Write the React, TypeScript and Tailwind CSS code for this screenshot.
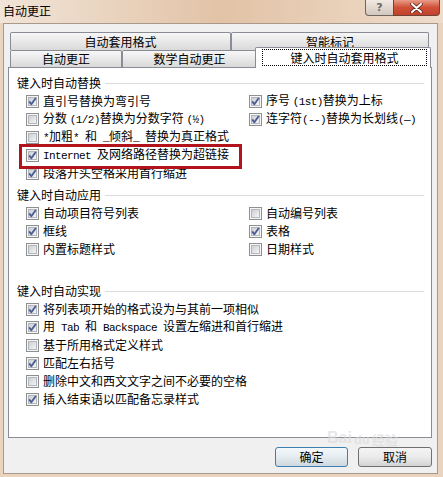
import React from "react";

function Check({ checked }: { checked: boolean }) {
  return (
    <svg width="13" height="13" viewBox="0 0 13 13" className="shrink-0">
      <defs>
        <linearGradient id="cbg" x1="0" y1="0" x2="1" y2="1">
          <stop offset="0" stopColor="#c9ccd2" />
          <stop offset="1" stopColor="#f7f7f7" />
        </linearGradient>
      </defs>
      <rect x="0.5" y="0.5" width="12" height="12" fill="#f6f6f6" stroke="#8e8f8f" />
      <rect x="2.5" y="2.5" width="8" height="8" fill="url(#cbg)" stroke="#b3b7bd" />
      {checked && (
        <path d="M3.2 6.4 L5.3 9.2 L9.8 3" stroke="#4b5d92" strokeWidth="1.9" fill="none" strokeLinejoin="round" />
      )}
    </svg>
  );
}

function M({ children }: { children: React.ReactNode }) {
  return (
    <span className="font-['Liberation_Mono',monospace] text-[11px] tracking-[-0.6px] whitespace-pre">{children}</span>
  );
}

function Row({ checked, children }: { checked: boolean; children: React.ReactNode }) {
  return (
    <div className="flex h-[18px] items-center gap-[4px] whitespace-nowrap">
      <Check checked={checked} />
      <span className="leading-[18px]">{children}</span>
    </div>
  );
}

function Header({ children }: { children: React.ReactNode }) {
  return (
    <div className="flex h-[18px] items-center pl-[8px] pr-[7px]">
      <span className="leading-[18px] whitespace-nowrap">{children}</span>
      <div className="ml-[4px] h-px flex-1 bg-[#dcdcdc]" />
    </div>
  );
}

function Tab({ w, children }: { w: string; children: React.ReactNode }) {
  return (
    <div
      className={`${w} flex h-full items-center justify-center rounded-t-[2px] border border-b-0 border-[#898c95] bg-linear-to-b from-[#f7f7f7] to-[#d9d9d9] leading-none`}
    >
      {children}
    </div>
  );
}

export default function App() {
  return (
    <div className="relative flex h-[477px] w-[443px] flex-col overflow-hidden bg-[#ead3bf] font-['Noto_Sans_CJK_SC',sans-serif] text-[12px] text-black">
      {/* title bar */}
      <div className="flex h-[23px] items-start bg-linear-to-r from-[#f1e4d8] via-[#e2c3a6] to-[#efdccb] pl-[3px] pr-[3px]">
        <span className="mt-[2px] leading-[18px]">自动更正</span>
        <div className="ml-auto flex h-[16px]">
          <div className="flex w-[28px] items-center justify-center rounded-bl-[4px] border border-t-0 border-r-0 border-[#6f645c] bg-linear-to-b from-[#f1e9e2] to-[#d3c8bf] font-['DejaVu_Sans',sans-serif] text-[11px] font-bold leading-none text-[#6a6a6a]">
            ?
          </div>
          <div className="flex w-[47px] items-center justify-center rounded-br-[4px] border border-t-0 border-[#6f4437] bg-linear-to-b from-[#e79a86] via-[#cf4f37] to-[#c2412a]">
            <svg width="13" height="10" viewBox="0 0 13 10">
              <path d="M2 1 L11 9 M11 1 L2 9" stroke="#5a2a20" strokeWidth="3.6" strokeLinecap="round" />
              <path d="M2 1 L11 9 M11 1 L2 9" stroke="#ffffff" strokeWidth="2" strokeLinecap="round" />
            </svg>
          </div>
        </div>
      </div>

      {/* client area */}
      <div className="ml-[3px] flex h-[451px] w-[435px] flex-col border border-[#a8998b] bg-[#f0f0f0]">
        {/* tabs */}
        <div className="ml-[6px] mt-[8px] flex h-[18px] w-[419px]">
          <Tab w="w-[221px]">自动套用格式</Tab>
          <Tab w="flex-1">智能标记</Tab>
        </div>
        <div className="ml-[6px] flex h-[17px] w-[421px] items-end">
          <Tab w="w-[112px]">自动更正</Tab>
          <Tab w="w-[135px]">数学自动更正</Tab>
          <div className="relative z-10 -mb-px -ml-[2px] flex h-[21px] flex-1 rounded-t-[2px] border border-b-0 border-[#898c95] bg-white pt-px">
            <div className="ml-[6px] mr-[3px] flex h-[17px] flex-1 items-center justify-center border border-dotted border-black leading-none">
              键入时自动套用格式
            </div>
          </div>
        </div>

        {/* panel */}
        <div className="relative ml-[4px] flex h-[371px] w-[424px] flex-col border border-[#898c95] bg-white pt-[6px]">
          <Header>键入时自动替换</Header>
          <div className="grid grid-cols-[223px_1fr] pl-[17px]">
            <div className="flex flex-col">
              <Row checked>直引号替换为弯引号</Row>
              <Row checked={false}>
                分数 <M>(1/2)</M>替换为分数字符 <M>(½)</M>
              </Row>
              <Row checked={false}>
                <M>*</M>加粗<M>* </M>和<M> _</M>倾斜<M>_ </M>替换为真正格式
              </Row>
              <Row checked>
                <M>Internet </M>及网络路径替换为超链接
              </Row>
              <Row checked>段落开头空格采用首行缩进</Row>
            </div>
            <div className="flex flex-col">
              <Row checked>
                序号 <M>(1st)</M>替换为上标
              </Row>
              <Row checked>
                连字符<M>(--)</M>替换为长划线<M>(—)</M>
              </Row>
            </div>
          </div>

          <div className="mt-[4px]">
            <Header>键入时自动应用</Header>
          </div>
          <div className="grid grid-cols-[223px_1fr] pl-[17px]">
            <div className="flex flex-col">
              <Row checked>自动项目符号列表</Row>
              <Row checked>框线</Row>
              <Row checked={false}>内置标题样式</Row>
            </div>
            <div className="flex flex-col">
              <Row checked={false}>自动编号列表</Row>
              <Row checked>表格</Row>
              <Row checked={false}>日期样式</Row>
            </div>
          </div>

          <div className="mt-[24px]">
            <Header>键入时自动实现</Header>
          </div>
          <div className="flex flex-col pl-[17px]">
            <Row checked>将列表项开始的格式设为与其前一项相似</Row>
            <Row checked>
              用<M> Tab </M>和<M> Backspace </M>设置左缩进和首行缩进
            </Row>
            <Row checked={false}>基于所用格式定义样式</Row>
            <Row checked>匹配左右括号</Row>
            <Row checked={false}>删除中文和西文文字之间不必要的空格</Row>
            <Row checked>插入结束语以匹配备忘录样式</Row>
          </div>

          {/* red highlight box */}
          <div className="absolute left-[10px] top-[76px] h-[25px] w-[223px] border-[3px] border-[#b3141c]" />
        </div>

        {/* buttons */}
        <div className="ml-[4px] mt-[9px] flex w-[424px] justify-end gap-[10px]">
          <div className="flex h-[20px] w-[73px] items-center justify-center rounded-[3px] border border-[#3c7fb1] bg-linear-to-b from-[#f4f8fa] via-[#e5ecf0] to-[#cfd8de] leading-none">
            确定
          </div>
          <div className="flex h-[20px] w-[74px] items-center justify-center rounded-[3px] border border-[#707070] bg-linear-to-b from-[#f4f4f4] via-[#ebebeb] to-[#d3d3d3] leading-none">
            取消
          </div>
        </div>
      </div>

      {/* faint watermark */}
      <div className="pointer-events-none absolute left-[327px] top-[430px] flex items-end gap-[2px] font-['Liberation_Sans',sans-serif] text-[16px] font-bold leading-none text-[#dadada] opacity-60">
        <span>Bai</span>
        <span className="text-[13px]">du</span>
        <span className="font-['Noto_Sans_CJK_SC',sans-serif] text-[13px]">经验</span>
      </div>
    </div>
  );
}
